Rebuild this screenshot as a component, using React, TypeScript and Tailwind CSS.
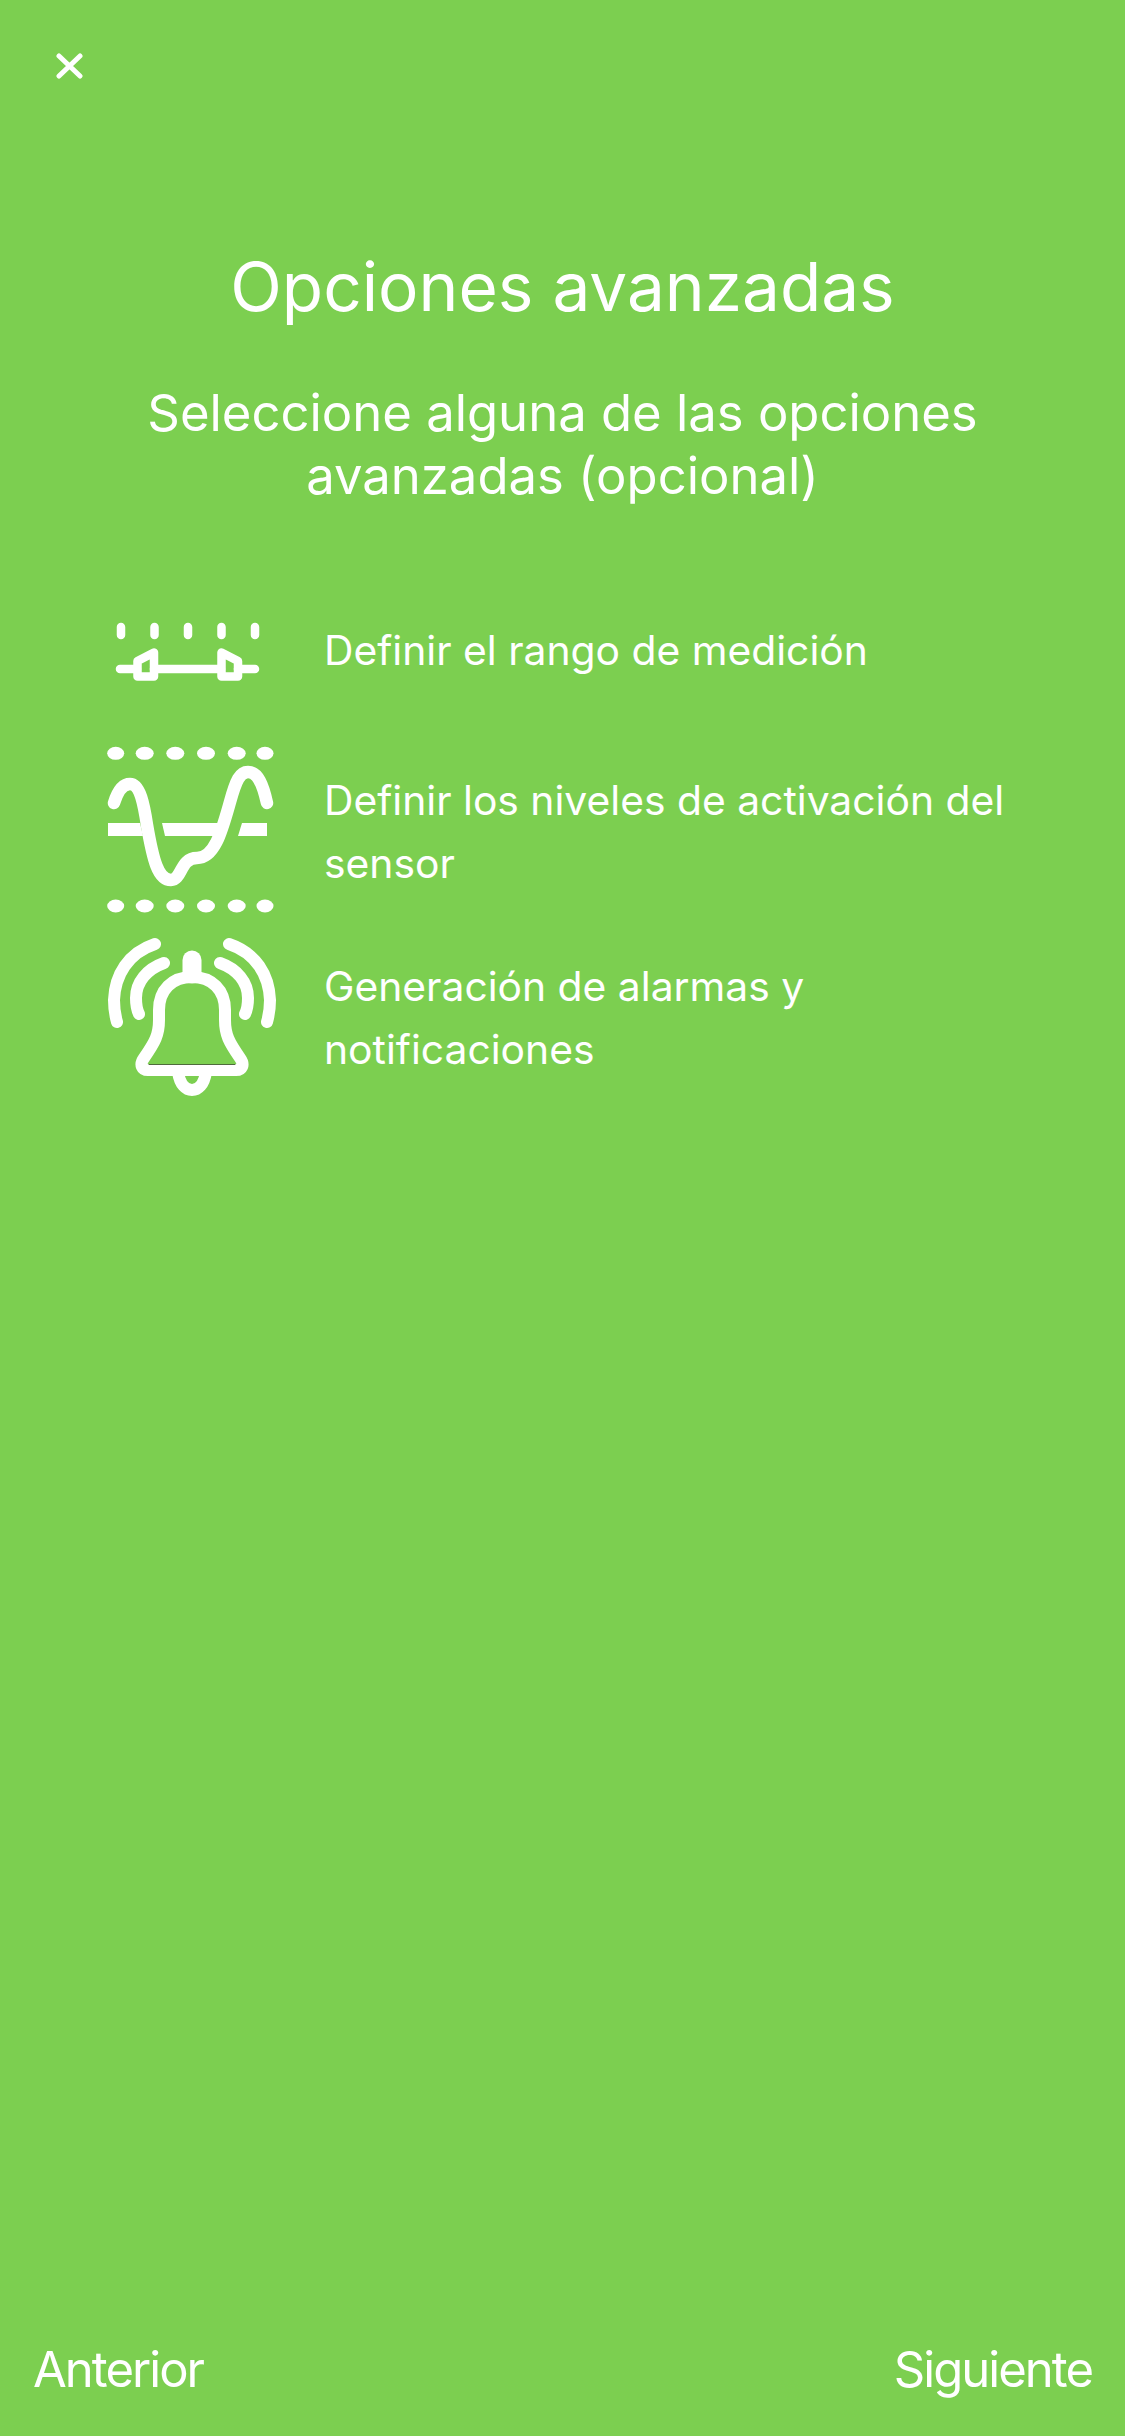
export default function App() {
  return (
    <div className="w-[1125px] h-[2436px] bg-[#7ccf50] text-white flex flex-col font-['Inter',sans-serif] overflow-hidden">
      {/* Close */}
      <div className="pl-[56px] pt-[53px]">
        <svg width="27" height="26" viewBox="0 0 27 26" fill="none" stroke="white" strokeWidth="5" strokeLinecap="round">
          <path d="M3 3L24 23M24 3L3 23" />
        </svg>
      </div>

      <h1 className="mt-[165px] text-center text-[67.500px] leading-[86px] font-normal">Opciones avanzadas</h1>
      <p className="mt-[51px] mx-auto w-[900px] text-center text-[50.800px] leading-[63px]">
        Seleccione alguna de las opciones avanzadas (opcional)
      </p>

      {/* Options */}
      <div className="mt-[93px] pl-[90px] flex flex-col">
        <div className="flex items-center gap-[34px] h-[110px]">
          <svg width="200" height="110" viewBox="0 0 200 110" fill="none" stroke="white" strokeWidth="8.500" strokeLinecap="round" strokeLinejoin="round">
            <path d="M31 27V35M64.500 27V35M98 27V35M131.500 27V35M165 27V35" />
            <path d="M30 69H47M64 69H131M148 69H165" />
            <path d="M47.500 61L64 52.500V76.500H47.500Z" />
            <path d="M131.500 52.500L148 61V76.500H131.500Z" />
          </svg>
          <span className="text-[40.800px] leading-[63px] pb-[10px]">Definir el rango de medición</span>
        </div>

        <div className="mt-5 flex items-center gap-[34px] h-[190px]">
          <svg width="200" height="190" viewBox="0 0 200 190" fill="white">
            <ellipse cx="25.700" cy="23.300" rx="8.500" ry="6.500" />
            <ellipse cx="54.700" cy="23.300" rx="9" ry="6.500" />
            <ellipse cx="85.300" cy="23.300" rx="9" ry="6.500" />
            <ellipse cx="116" cy="23.300" rx="9" ry="6.500" />
            <ellipse cx="146.700" cy="23.300" rx="9" ry="6.500" />
            <ellipse cx="175" cy="23.300" rx="8.500" ry="6.500" />
            <ellipse cx="25.700" cy="176" rx="8.500" ry="6.500" />
            <ellipse cx="54.700" cy="176" rx="9" ry="6.500" />
            <ellipse cx="85.300" cy="176" rx="9" ry="6.500" />
            <ellipse cx="116" cy="176" rx="9" ry="6.500" />
            <ellipse cx="146.700" cy="176" rx="9" ry="6.500" />
            <ellipse cx="175" cy="176" rx="8.500" ry="6.500" />
            <path d="M18 93H50L53 106H18Z" />
            <path d="M72 93H129L124 106H75Z" />
            <path d="M152 93H177V106H148Z" />
            <path
              d="M24 73C28 60 33 54 40 54C50 54 54 75 57 95C63 130 68 150 81 150C92 150 90 128 107 128C125 128 132 100 140 72C146 50 150 42 158 42C168 42 173 55 177 73"
              fill="none"
              stroke="white"
              strokeWidth="12.500"
              strokeLinecap="round"
            />
          </svg>
          <span className="w-[700px] text-[40.800px] leading-[63px] pt-[14px]">Definir los niveles de activación del sensor</span>
        </div>

        <div className="flex items-center gap-[34px] h-[190px]">
          <svg width="200" height="190" viewBox="0 0 200 190" fill="none" stroke="white" strokeWidth="12" strokeLinecap="round" strokeLinejoin="round">
            <path d="M65 24C38 33 25 55 24 80C24 88 25 95 27 102" />
            <path d="M139 24C166 33 179 55 180 80C180 88 179 95 177 102" />
            <path d="M74 43C57 49 46 62 46 78C46 84 47 90 49 94" />
            <path d="M130 43C147 49 158 62 158 78C158 84 157 90 155 94" />
            <path d="M102 40V54" strokeWidth="19" />
            <path d="M102 57C82 57 69 70 69 90V100C69 115 65 122 54 138C49 145 52 150 58 150H146C152 150 155 145 150 138C139 122 135 115 135 100V90C135 70 122 57 102 57Z" />
            <path d="M88 152C90 165 96 170 102 170C108 170 114 165 116 152" />
            <path d="M59 144.500H145" stroke="#4f6b3c" strokeWidth="1" />
          </svg>
          <span className="w-[700px] text-[40.800px] leading-[63px] pt-[6px]">Generación de alarmas y notificaciones</span>
        </div>
      </div>

      {/* Footer nav */}
      <div className="mt-auto mb-[34px] px-[33px] flex items-center justify-between text-[49px] tracking-[-0.04em] leading-[64px]">
        <span>Anterior</span>
        <span>Siguiente</span>
      </div>
    </div>
  )
}
